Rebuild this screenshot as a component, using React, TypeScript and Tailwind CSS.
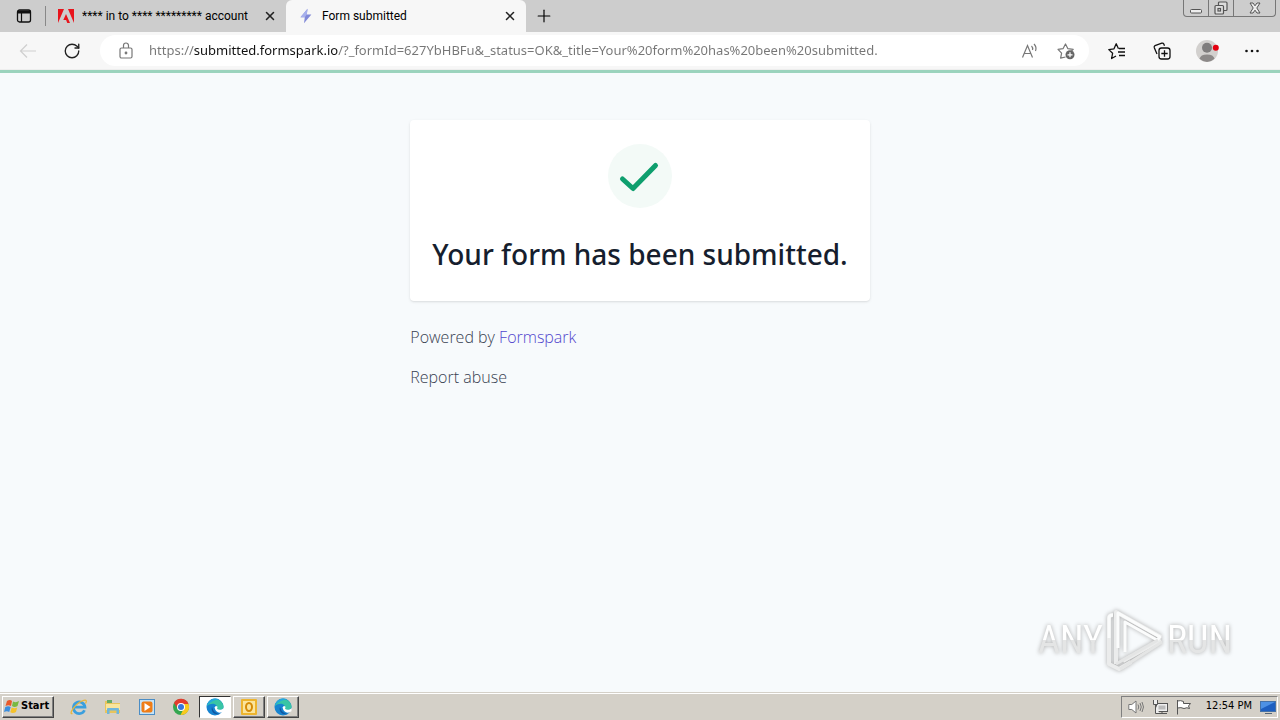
import type { ReactNode } from "react";
import { Plus, RotateCw, X } from "lucide-react";

type TabProps = {
  title: string;
  icon: ReactNode;
  active?: boolean;
};

function Tab({ title, icon, active }: TabProps) {
  return (
    <div
      className={`flex h-8 w-60 items-center rounded-t-md pr-2 pl-3 ${
        active ? "bg-[#f7f7f7]" : "bg-transparent"
      }`}
    >
      <button
        type="button"
        role="tab"
        aria-selected={!!active}
        className="flex min-w-0 flex-1 items-center gap-2 text-left"
      >
        {icon}
        <span className="truncate font-['Roboto',sans-serif] text-xs text-black">{title}</span>
      </button>
      <button type="button" aria-label={`Close ${title}`} className="flex size-4 items-center justify-center">
        <X className="size-3.5 text-[#222]" strokeWidth={2.6} />
      </button>
    </div>
  );
}

function AdobeIcon() {
  return (
    <svg viewBox="0 0 16 14" className="h-3.5 w-4 shrink-0" fill="#e8141c">
      <path d="M0 0h6L0 14zM10 0h6v14zM8 5l4 9H9.300l-1.200-3H5.300z" />
    </svg>
  );
}

function BoltIcon() {
  return (
    <svg viewBox="0 0 16 16" className="size-4 shrink-0">
      <path d="M9.500 0.800 2.500 9.200h4.300L6 15.200 13.400 6.600H8.800z" fill="#8189d8" />
      <path d="M9.500 0.800 2.500 9.200h4.300l2-2.600z" fill="#a7b0ec" />
    </svg>
  );
}

function TabStrip() {
  return (
    <div className="flex h-8 bg-[#cdcdcd]">
      <div className="flex items-center pl-4">
        <button type="button" aria-label="Tab actions">
          <svg viewBox="0 0 16 16" className="size-4" fill="none" stroke="#111">
            <rect x="1.500" y="2" width="13" height="12" rx="2" strokeWidth="1.300" />
            <path d="M1.500 4h13" strokeWidth="3" />
            <path d="M5.500 5v9" strokeWidth="1.200" />
          </svg>
        </button>
        <div className="ml-[13px] h-5 w-px bg-[#888]" />
      </div>
      <div role="tablist" className="flex">
        <Tab title="**** in to **** ********* account" icon={<AdobeIcon />} />
        <Tab title="Form submitted" icon={<BoltIcon />} active />
      </div>
      <button type="button" aria-label="New tab" className="ml-2 flex w-5 items-center justify-center">
        <Plus className="size-5 text-black" strokeWidth={1.4} />
      </button>
      <div className="mr-1 ml-auto flex h-[17px] rounded-b border border-t-0 border-[#777] text-[#555]">
        <button type="button" aria-label="Minimize" className="flex w-6 items-center justify-center">
          <svg viewBox="0 0 14 14" className="size-3.5" fill="#eee" stroke="currentColor">
            <rect x="1.500" y="8.500" width="11" height="3.500" rx="1" />
          </svg>
        </button>
        <button type="button" aria-label="Restore" className="flex w-[26px] items-center justify-center border-x border-[#777]">
          <svg viewBox="0 0 14 14" className="size-3.5" fill="#ddd" stroke="currentColor" strokeWidth="1.200">
            <rect x="4.500" y="1" width="8.500" height="8.500" rx="1" />
            <rect x="1" y="4.500" width="8.500" height="8.500" rx="1" />
            <rect x="4" y="7.500" width="2.500" height="2.500" />
          </svg>
        </button>
        <button type="button" aria-label="Close" className="flex w-[41px] items-center justify-center">
          <svg viewBox="0 0 14 14" className="size-3.5" fill="#eee" stroke="currentColor">
            <path d="M2 2h3l2 2.800L9 2h3L8.800 7l3.200 5H9L7 9.200 5 12H2l3.200-5z" />
          </svg>
        </button>
      </div>
    </div>
  );
}

function Toolbar() {
  return (
    <div className="flex h-[38px] items-center border-b border-[#eee] bg-[#f7f7f7] px-4">
      <button type="button" aria-label="Back" disabled className="flex w-6 justify-center">
        <svg viewBox="0 0 18 16" className="h-4 w-[18px]" fill="none" stroke="#cfcfcf" strokeWidth="1.200">
          <path d="M17 8H1.500M8 1.500 1.500 8 8 14.500" />
        </svg>
      </button>
      <button type="button" aria-label="Refresh" className="ml-5 flex w-6 justify-center">
        <RotateCw className="size-[18px] text-[#222]" strokeWidth={1.8} />
      </button>
      <div className="ml-4 flex h-[31px] flex-1 items-center rounded-full bg-white pr-3.5 pl-[18px]">
        <svg viewBox="0 0 16 18" className="h-[18px] w-4" fill="none" stroke="#777" strokeWidth="1.200">
          <rect x="2" y="6" width="12" height="10" rx="1.500" />
          <path d="M5.500 6V3.500a2.500 2.500 0 0 1 5 0V6" />
          <circle cx="8" cy="11" r="0.800" fill="#777" />
        </svg>
        <input
          type="text"
          aria-label="Address"
          defaultValue="https://submitted.formspark.io/?_formId=627YbHBFu&_status=OK&_title=Your%20form%20has%20been%20submitted."
          className="ml-[15px] min-w-0 flex-1 bg-[linear-gradient(to_right,#767676_45px,#111_45px,#111_189px,#767676_189px)] bg-clip-text text-[13px] text-transparent outline-none"
        />
        <button type="button" aria-label="Read aloud" className="mr-[18px]">
          <svg viewBox="0 0 18 16" className="h-4 w-[18px]" fill="none" stroke="#777" strokeWidth="1.200">
            <path d="M1.500 14.500 6.500 2.500l5 12M3.200 10.500h6.600M10.500 3q1.600 1.500 1 4M13 1q3 3 1.500 7" />
          </svg>
        </button>
        <button type="button" aria-label="Add to favorites">
          <svg viewBox="0 0 18 18" className="size-[18px]" fill="none" stroke="#777" strokeWidth="1.200">
            <path d="M8.500 15 3.600 16.200 4.600 11.200 1 7.400l5-.7L8.500 2l2.400 4.700 5.300.7-2 2" strokeLinejoin="round" />
            <circle cx="13" cy="12.800" r="4.500" fill="#666" stroke="none" />
            <path d="M13 10.300v5M10.500 12.800h5" stroke="#fff" />
          </svg>
        </button>
      </div>
      <div className="flex items-center gap-[21px] pl-4">
        <button type="button" aria-label="Favorites" className="flex w-6 justify-center">
          <svg viewBox="0 0 18 18" className="size-[18px]" fill="none" stroke="#111" strokeWidth="1.300">
            <path d="M10.500 6.800 8.200 1.800 6 6.800l-5.200.8L4.600 11.300 3.600 16.500 8 14M11 6.500h6M10 10h7M11 13.500h6" strokeLinejoin="round" />
          </svg>
        </button>
        <button type="button" aria-label="Collections" className="flex w-6 justify-center">
          <svg viewBox="0 0 18 18" className="size-[18px]" fill="none" stroke="#111" strokeWidth="1.300">
            <path d="M4 12 1.300 5.800Q.8 4.300 2 3.700L8.800 1.200q1.400-.4 2 .9l.7 1.600" />
            <rect x="6" y="6" width="11" height="11" rx="2.500" />
            <path d="M11.500 8.300v6.400M8.300 11.500h6.400" />
          </svg>
        </button>
        <button type="button" aria-label="Profile" className="flex w-6 justify-center">
          <svg viewBox="0 0 24 24" className="size-6">
            <circle cx="12" cy="12" r="11" fill="#d2d0ce" />
            <circle cx="12" cy="8.700" r="5" fill="#7f7d7d" />
            <path d="M4.500 19.800Q5.500 15.500 12 15.500t7.500 4.300Q16 23 12 23t-7.500-3.200" fill="#8c8988" />
            <circle cx="20.800" cy="8.800" r="3" fill="#e3000f" />
          </svg>
        </button>
        <button type="button" aria-label="Settings and more" className="flex w-6 justify-center">
          <svg viewBox="0 0 14 4" className="h-1 w-3.5" fill="#111">
            <circle cx="1.500" cy="2" r="1.300" />
            <circle cx="7" cy="2" r="1.300" />
            <circle cx="12.500" cy="2" r="1.300" />
          </svg>
        </button>
      </div>
    </div>
  );
}

function Watermark() {
  return (
    <div
      aria-hidden="true"
      className="absolute right-12 bottom-5 flex items-center gap-0.5 font-['Liberation_Sans_Narrow','Roboto_Condensed','Liberation_Sans',sans-serif] text-[38px] leading-none drop-shadow-[0_0_2px_#aaa]"
    >
      <span className="bg-linear-to-b from-white from-50% to-[#e4e5e5] to-50% bg-clip-text text-transparent">ANY</span>
      <svg viewBox="0 0 60 64" className="h-16 w-[60px]" fill="none" strokeWidth="4" strokeLinejoin="round">
        <path d="M11 56V4l45 25M4 48V10q0-3 4-3M18 53 56 32M4 48v8l10 5 12-7" stroke="#ebecec" />
        <path d="M13 40V5l42 24-3 3-32-18v30M4 30V10q0-3 4-3" stroke="#fbfcfc" strokeWidth="3" />
        <path d="M11 56 53 32M15 61 57 34" stroke="#e4e5e5" strokeWidth="3" />
      </svg>
      <span className="bg-linear-to-b from-white from-50% to-[#e4e5e5] to-50% bg-clip-text text-transparent">RUN</span>
    </div>
  );
}

function EdgeIcon() {
  return (
    <svg viewBox="0 0 18 18" className="size-[18px]">
      <circle cx="9" cy="9" r="8.500" fill="#1683d0" />
      <path d="M.8 8A8.500 8.500 0 0 1 17.500 8c.2 3-2 4-4.500 4-2 0-2.600-.8-2-2C11.500 6 6 4 .8 8" fill="#39c5a5" />
      <path d="M.8 8A8.500 8.500 0 0 1 13 1.500C9 2 5 3 .8 8" fill="#24a9dc" />
      <path d="M6 9c-1.500 4 2 8.500 8 7A8.500 8.500 0 0 1 6 9" fill="#12559f" />
      <path d="M8.500 9.500Q9.500 7 11.300 8.500c.8 1-.8 1.500 0 2.500 1.200 1.300 4.200 1 6.200-.8v3l-2.500 1.300Q10 15.500 8.500 9.500" fill="#fff" />
    </svg>
  );
}

function TaskButton({ label, pressed, children }: { label: string; pressed?: boolean; children: ReactNode }) {
  return (
    <button
      type="button"
      aria-label={label}
      className={`flex h-[22px] w-8 items-center justify-center border ${
        pressed
          ? "border-t-[#333] border-r-white border-b-white border-l-[#333] bg-white"
          : "border-t-white border-r-[#444] border-b-[#444] border-l-white bg-[#d4d0c8] shadow-[inset_-1px_-1px_0_#808080]"
      }`}
    >
      {children}
    </button>
  );
}

function Taskbar() {
  return (
    <footer className="flex h-7 items-center border-t border-[#d4d0c8] bg-[#d4d0c8] px-0.5 font-['DejaVu_Sans_Condensed','DejaVu_Sans',sans-serif] shadow-[inset_0_1px_0_#fff]">
      <button
        type="button"
        className="flex h-[22px] w-[52px] items-center gap-px border border-t-white border-r-[#444] border-b-[#444] border-l-white pl-px text-[11px] font-bold text-black shadow-[inset_-1px_-1px_0_#808080]"
      >
        <svg viewBox="0 0 16 16" className="size-4 shrink-0">
          <path d="M3 2q3-2 5 0L7 7Q4.500 5.500 1.500 7z" fill="#e8592b" />
          <path d="M9 2.500q3 1.500 6-.5l-1.500 5q-3 1.800-5.500 0z" fill="#79b943" />
          <path d="M1.300 8q3-1.500 5.400 0l-1.500 5Q3 11.500 0 13z" fill="#3b8ede" />
          <path d="M7.700 8.500q3 1.500 5.500 0L12 13q-3 2-5.700.3z" fill="#f5c22b" />
        </svg>
        Start
      </button>
      <nav aria-label="Quick launch" className="ml-4 flex items-center gap-4">
        <button type="button" aria-label="Internet Explorer">
          <svg viewBox="0 0 18 18" className="size-[18px]" fill="none">
            <path d="M14.500 12.200a5.800 5.800 0 1 1 .5-3H5" stroke="#3a9fde" strokeWidth="2.700" />
            <path d="M2.500 15.500C-2 17 5 6 12 3c5-2 5 0 3.500 2.500" stroke="#e9b63a" strokeWidth="1.300" />
          </svg>
        </button>
        <button type="button" aria-label="Windows Explorer">
          <svg viewBox="0 0 18 18" className="size-[18px]">
            <path d="M1 3h6l1 2h8v10H1z" fill="#e8c45c" />
            <path d="M3 2h5v3H3z" fill="#66ab65" />
            <path d="M2 6h14v6H2z" fill="#f8e59d" />
            <path d="M3 16v-5q0-1 1-1h10q1 0 1 1v5h-2.500v-3.500h-7V16z" fill="#6eb6dc" />
          </svg>
        </button>
        <button type="button" aria-label="Media Player">
          <svg viewBox="0 0 18 18" className="size-[18px]">
            <rect x="1.500" y="1.500" width="15" height="15" fill="#c5e3f7" stroke="#4b8dc5" />
            <rect x="3.500" y="3.500" width="11" height="11" rx="2" fill="#ef7d17" />
            <path d="m6.500 5 6 4-6 4z" fill="#fff" />
          </svg>
        </button>
        <button type="button" aria-label="Chrome">
          <svg viewBox="0 0 18 18" className="size-[18px]">
            <circle cx="9" cy="9" r="8" fill="#33a650" />
            <path d="M2 5a8 8 0 0 1 14.500 1H9L6 11z" fill="#e33b2e" />
            <path d="M9 6h7.500A8 8 0 0 1 8.500 17L12 10z" fill="#f9c91e" />
            <circle cx="9" cy="9" r="4" fill="#fff" />
            <circle cx="9" cy="9" r="3" fill="#3576dc" />
          </svg>
        </button>
      </nav>
      <div className="ml-[9px] flex gap-0.5">
        <TaskButton label="Edge" pressed>
          <EdgeIcon />
        </TaskButton>
        <TaskButton label="Outlook">
          <svg viewBox="0 0 18 18" className="size-[18px]">
            <rect x="1" y="1" width="16" height="16" rx="1" fill="#edb42e" />
            <rect x="3" y="3" width="12" height="12" fill="#fbe49b" />
            <ellipse cx="9" cy="9" rx="3" ry="4" fill="none" stroke="#d58b08" strokeWidth="2" />
          </svg>
        </TaskButton>
        <TaskButton label="Edge window">
          <EdgeIcon />
        </TaskButton>
      </div>
      <div className="ml-auto flex h-[22px] items-center gap-2 border border-t-[#808080] border-r-white border-b-white border-l-[#808080] pr-px pl-1.5">
        <svg viewBox="0 0 16 16" className="size-4" fill="#fff" stroke="#777">
          <path d="M.8 5.500h3L8 2v12l-4.200-3.500h-3z" />
          <path d="M10 5.500q1.500 2.500 0 5M12 4q2.500 4 0 8M14 3q3 5 0 10" fill="none" />
        </svg>
        <svg viewBox="0 0 16 16" className="size-4" fill="#eee" stroke="#555">
          <rect x="4.500" y="4.500" width="11" height="8" />
          <rect x="6.500" y="6.500" width="7" height="4" fill="#bbb" stroke="none" />
          <path d="M6 14.500h9M10 12.500v2M1.500 1v4.500h4V1M3.500 5.500v9h4" />
        </svg>
        <svg viewBox="0 0 16 16" className="size-4" fill="#fff" stroke="#555">
          <path d="M1.500 1v14.500M1.500 2q3-1 6 .5v2h7L12.500 7l1 2.500Q11 8 8 9.500 5 8 1.500 9" />
        </svg>
        <time className="ml-1.5 text-[11px] whitespace-nowrap text-black">12:54 PM</time>
        <svg viewBox="0 0 16 16" className="size-4">
          <rect x="0.500" y="2.500" width="15" height="10" fill="#1e5fc0" stroke="#4572a8" />
          <path d="M1 3h14L1 10z" fill="#4d91e4" />
          <path d="M5 14.500h7" stroke="#567" />
        </svg>
      </div>
    </footer>
  );
}

export default function App() {
  return (
    <div className="flex min-h-screen flex-col bg-[#f7fafc] font-['Noto_Sans','Open_Sans',sans-serif]">
      <header>
        <TabStrip />
        <Toolbar />
      </header>
      <main className="relative flex flex-1 flex-col items-center border-t-3 border-[#9bd3bd] pt-[47px]">
        <div>
          <section className="flex flex-col items-center rounded-sm bg-white px-[22px] py-6 shadow-sm">
            <svg viewBox="0 0 64 64" className="size-16" fill="none">
              <circle cx="32" cy="32" r="32" fill="#f3faf7" />
              <path d="M14.500 35 25 44.500 47.500 21.500" stroke="#0e9f6e" strokeWidth="5" strokeLinecap="round" strokeLinejoin="round" />
            </svg>
            <h1 className="mt-6 text-[28px] leading-[45px] font-medium whitespace-nowrap text-[#161e2e]">
              Your form has been submitted.
            </h1>
          </section>
          <p className="mt-6 font-['Open_Sans','Noto_Sans',sans-serif] text-base font-light text-[#374151]">
            Powered by{" "}
            <a href="#formspark" className="text-[#5145cd]">
              Formspark
            </a>
          </p>
          <p className="mt-4 font-['Open_Sans','Noto_Sans',sans-serif] text-base font-light text-[#374151]">
            <a href="#report">Report abuse</a>
          </p>
        </div>
        <Watermark />
      </main>
      <Taskbar />
    </div>
  );
}
